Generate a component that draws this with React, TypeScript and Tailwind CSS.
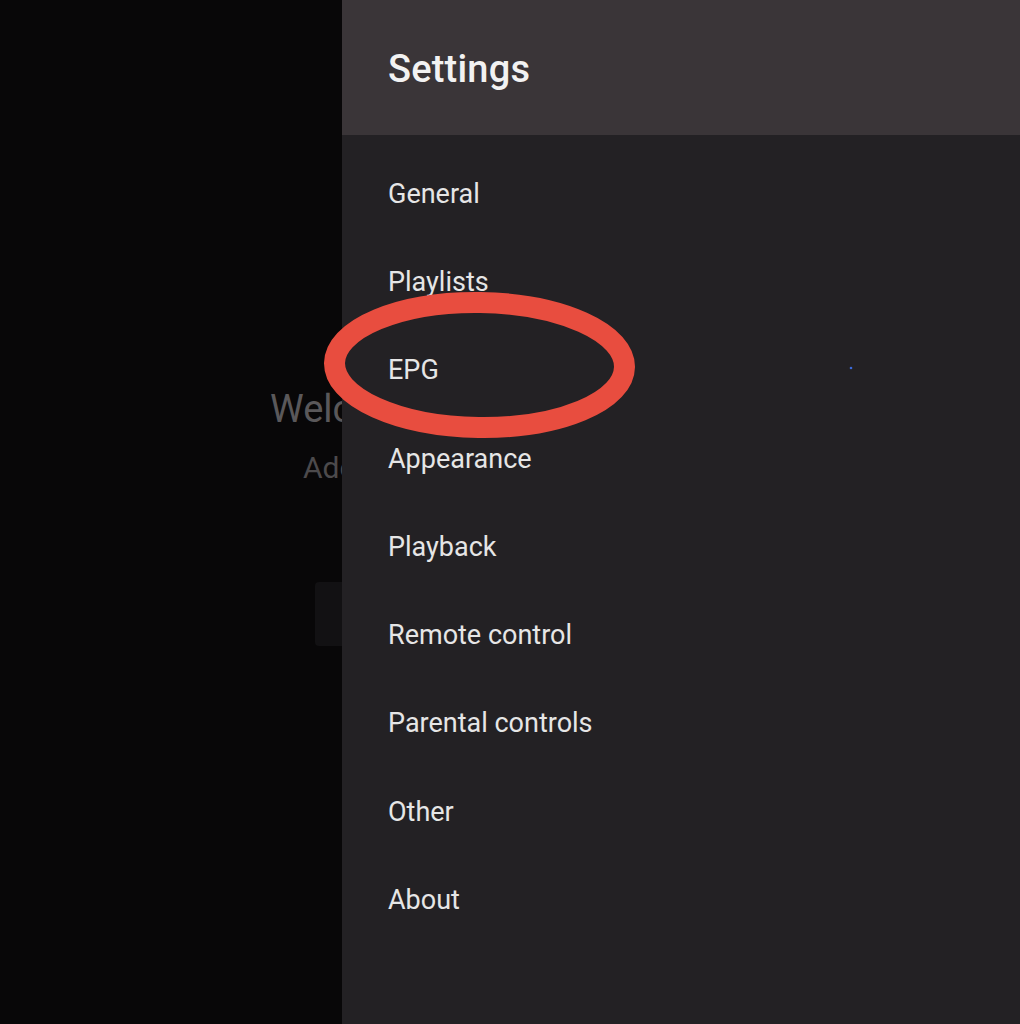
import React from 'react';

const ITEMS = [
  'General',
  'Playlists',
  'EPG',
  'Appearance',
  'Playback',
  'Remote control',
  'Parental controls',
  'Other',
  'About',
];

const App: React.FC = () => {
  return (
    <div className="relative flex w-[1020px] h-[1024px] overflow-hidden bg-[#080708] font-['Roboto',sans-serif]">
      {/* Background screen, mostly covered by the settings drawer */}
      <div className="w-[342px] h-full overflow-hidden shrink-0">
        <div className="pt-[386px] pl-[270px] w-[342px]">
          <p className="w-[72px] overflow-hidden text-[38px] leading-[46px] text-[#5a585a] whitespace-nowrap">Welcome</p>
          <p className="w-[39px] overflow-hidden mt-[18px] ml-[33px] text-[30px] leading-[36px] text-[#4c4a4c] whitespace-nowrap">Add</p>
          <div className="mt-[96px] ml-[45px] w-[27px] h-[64px] rounded-l bg-[#121113]"></div>
        </div>
      </div>

      {/* Settings drawer */}
      <div className="flex-1 flex flex-col bg-[#232124]">
        <div className="h-[135px] bg-[#3a3538] flex items-center pl-[46px] pt-[4px]">
          <h1 className="text-[38px] font-medium text-[#f2f2f2] tracking-[0.2px]">Settings</h1>
        </div>
        <ul className="pt-[15px] pl-[46px]">
          {ITEMS.map((item) => (
            <li key={item} className="h-[88.25px] flex items-center text-[27px] text-[#e6e6e6]">
              {item}
            </li>
          ))}
        </ul>
      </div>

      {/* Red highlight around EPG */}
      <svg className="absolute left-0 top-0 pointer-events-none" width="1020" height="1024">
        <ellipse cx="479.5" cy="365" rx="145" ry="62.5" fill="none" stroke="#e84d3f" strokeWidth="21" transform="rotate(0.8 479.5 365)" />
        <circle cx="851" cy="368" r="1.3" fill="#3b6ad8" />
      </svg>
    </div>
  );
};

export default App;
